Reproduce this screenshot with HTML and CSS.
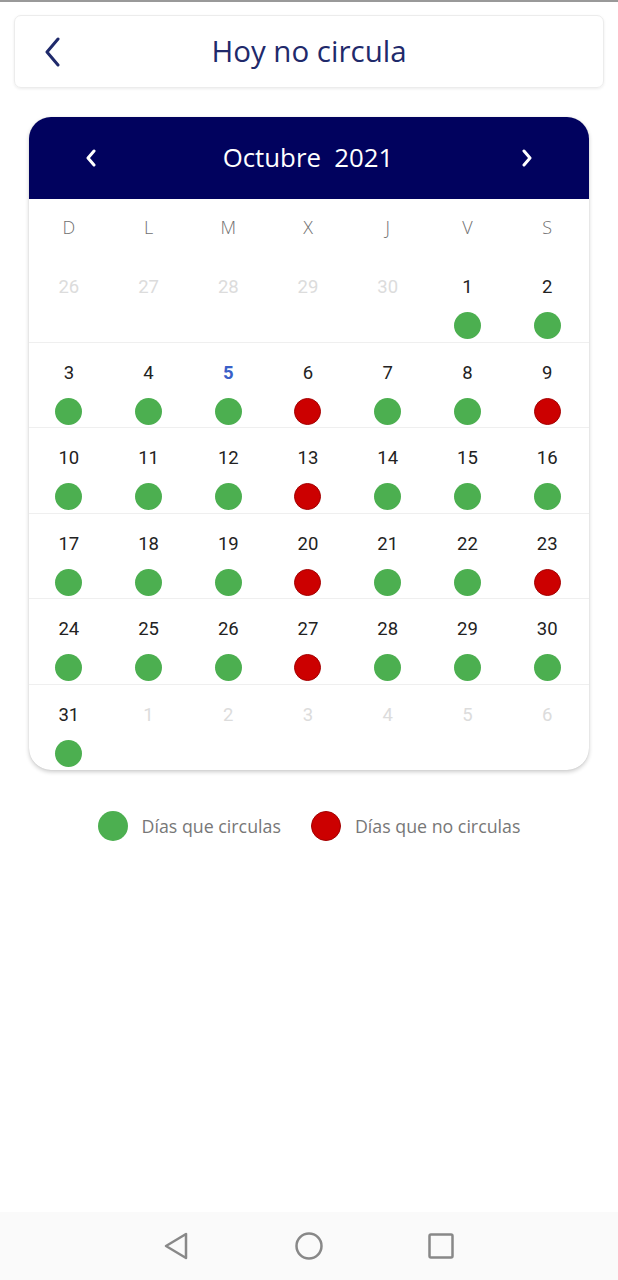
FILE: index.html
```html
<html>
    <head>
        <title>Hoy no circula</title>
        <meta charset="utf-8">
        <link rel="stylesheet" href="styles.css">
    </head>
    <body>
        <div class="page">
            <div class="topbar">
                <button class="back" title="Regresar">
                    <svg width="18" height="30" viewBox="0 0 18 30"><path d="M15 2 L4 15 L15 28" fill="none" stroke="#1f2a6b" stroke-width="3" stroke-linecap="round" stroke-linejoin="round"/></svg>
                </button>
                <h1>Hoy no circula</h1>
            </div>

            <div class="calendar">
                <div class="cal-head">
                    <button class="nav" title="Anterior">
                        <svg width="12" height="18" viewBox="0 0 12 18"><path d="M9 2 L3 9 L9 16" fill="none" stroke="#fff" stroke-width="3" stroke-linecap="round" stroke-linejoin="round"/></svg>
                    </button>
                    <div class="month">Octubre&nbsp; 2021</div>
                    <button class="nav" title="Siguiente">
                        <svg width="12" height="18" viewBox="0 0 12 18"><path d="M3 2 L9 9 L3 16" fill="none" stroke="#fff" stroke-width="3" stroke-linecap="round" stroke-linejoin="round"/></svg>
                    </button>
                </div>
                <div class="weekdays">
                    <span>D</span><span>L</span><span>M</span><span>X</span><span>J</span><span>V</span><span>S</span>
                </div>
                <div id="days" class="days"></div>
            </div>

            <div class="legend">
                <div class="legend-item"><span class="dot ok"></span>Días que circulas</div>
                <div class="legend-item"><span class="dot no"></span>Días que no circulas</div>
            </div>

            <div class="navbar">
                <svg width="30" height="30" viewBox="0 0 30 30"><path d="M24 3 L24 27 L4 15 Z" fill="none" stroke="#888" stroke-width="2.5" stroke-linejoin="round"/></svg>
                <svg width="30" height="30" viewBox="0 0 30 30"><circle cx="15" cy="15" r="12.5" fill="none" stroke="#888" stroke-width="2.5"/></svg>
                <svg width="30" height="30" viewBox="0 0 30 30"><rect x="3.5" y="3.5" width="23" height="23" rx="1.5" fill="none" stroke="#888" stroke-width="2.5"/></svg>
            </div>
        </div>
        <script type="text/javascript">
            var days = document.getElementById("days"),
                noCircula = [6, 9, 13, 20, 23, 27],
                today = 5;

            // previous month, current month, next month
            var cells = [];
            for(var i=26; i<=30; ++i) cells.push({n: i, muted: true});
            for(var d=1; d<=31; ++d) cells.push({n: d});
            for(var j=1; j<=6; ++j) cells.push({n: j, muted: true});

            for(var r=0; r<cells.length/7; ++r){
                var row = document.createElement("div");
                row.className = "week";
                for(var c=0; c<7; ++c){
                    var cell = cells[r*7+c],
                        el = document.createElement("div"),
                        num = document.createElement("span");
                    el.className = "day";
                    num.className = "num";
                    if(cell.muted) num.className += " muted";
                    if(!cell.muted && cell.n == today) num.className += " today";
                    num.textContent = cell.n;
                    el.appendChild(num);
                    if(!cell.muted){
                        var dot = document.createElement("span");
                        dot.className = "dot " + (noCircula.indexOf(cell.n) > -1 ? "no" : "ok");
                        el.appendChild(dot);
                    }
                    row.appendChild(el);
                }
                days.appendChild(row);
            }
        </script>
    </body>
</html>
```

FILE: styles.css
```css
*{
    box-sizing: border-box;
}
body{
    margin: 0;
    font-family: "Open Sans", sans-serif;
    background: #FFF;
}
button{
    background: none;
    border: none;
    padding: 0;
    cursor: pointer;
}

.page{
    height: 1280px;
    display: flex;
    flex-direction: column;
    border-top: 2px solid #999;
    padding: 13px 14px 0;
}

.topbar{
    height: 73px;
    display: flex;
    align-items: center;
    position: relative;
    border: 1px solid #ececec;
    border-radius: 7px;
    box-shadow: 0 1px 3px rgba(0, 0, 0, .08);
}
.topbar .back{
    position: absolute;
    left: 28px;
    top: 21px;
    display: flex;
}
.topbar h1{
    flex: 1;
    margin: 0 0 2px;
    text-align: center;
    font-size: 29.5px;
    font-weight: 400;
    color: #1f2a6b;
}

.calendar{
    margin: 29px 15px 0;
    border-radius: 22px;
    overflow: hidden;
    box-shadow: 0 2px 4px rgba(0, 0, 0, .2), 0 0 1px rgba(0, 0, 0, .15);
}
.cal-head{
    height: 82px;
    background: #01025e;
    display: flex;
    align-items: center;
    justify-content: space-between;
    padding: 0 56px 2px;
}
.cal-head .nav{
    display: flex;
    margin-top: 2px;
}
.month{
    color: #FFF;
    font-size: 25.8px;
    margin-right: 2px;
}

.weekdays, .week{
    display: grid;
    grid-template-columns: repeat(7, 1fr);
    padding: 0 2px 0 0;
}
.weekdays{
    height: 58px;
    align-items: center;
    text-align: center;
    font-size: 18px;
    font-weight: 300;
    color: #707070;
    padding-bottom: 2px;
}

.week{
    height: 85.5px;
    border-bottom: 1px solid #efefef;
}
.week:last-child{
    border-bottom: none;
}
.day{
    display: flex;
    flex-direction: column;
    align-items: center;
    padding-top: 19px;
}
.num{
    font-family: Roboto, sans-serif;
    font-size: 18.5px;
    line-height: 22px;
    color: #222;
}
.num.muted{
    color: #dcdcdc;
}
.num.today{
    color: #3a5fc8;
    font-weight: 700;
}
.day .dot{
    margin-top: 14px;
}

.dot{
    display: block;
    width: 27px;
    height: 27px;
    border-radius: 50%;
}
.dot.ok{
    background: #4caf50;
}
.dot.no{
    background: #cc0000;
    border: 1px solid #a30000;
}

.legend{
    margin-top: 41px;
    display: flex;
    justify-content: center;
    gap: 30px;
    font-size: 17.8px;
    color: #777;
}
.legend-item{
    display: flex;
    align-items: center;
    gap: 14px;
}
.legend .dot{
    width: 30px;
    height: 30px;
}

.navbar{
    margin: auto -14px 0;
    height: 68px;
    background: #fafafa;
    display: flex;
    align-items: center;
    justify-content: center;
    gap: 102px;
}
```
